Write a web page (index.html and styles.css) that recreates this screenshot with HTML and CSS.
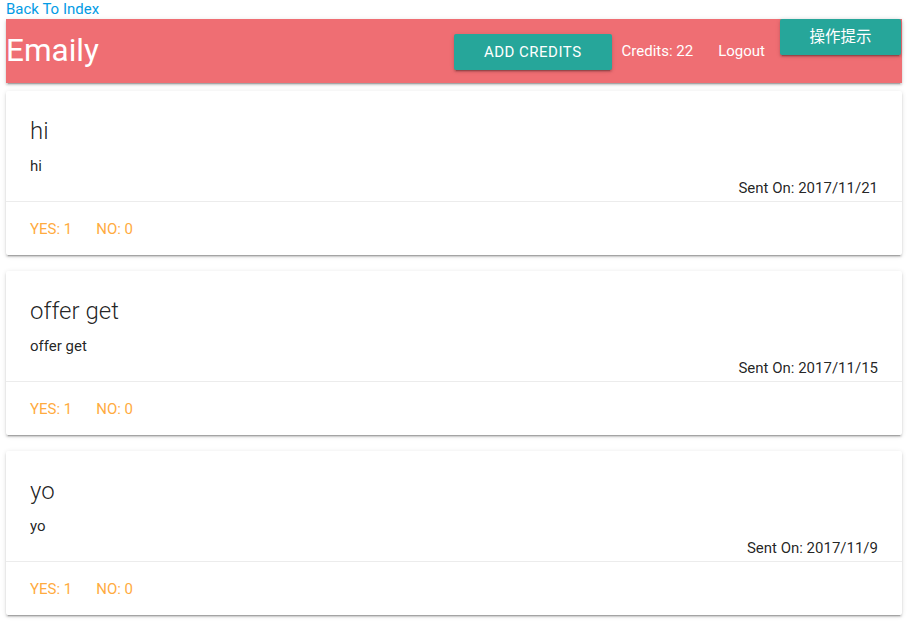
FILE: index.html
```html
<!DOCTYPE html>
<html>
<head>
<meta charset="utf-8">
<link rel="stylesheet" href="styles.css">
</head>
<body>
<div class="page">
  <div class="back"><a href="#">Back To Index</a></div>
  <nav class="nav">
    <a class="brand" href="#">Emaily</a>
    <ul class="menu">
      <li><button class="btn">Add Credits</button></li>
      <li class="credits">Credits: 22</li>
      <li><a class="navlink" href="#">Logout</a></li>
    </ul>
    <button class="btn tip">操作提示</button>
  </nav>

  <div class="card">
    <div class="card-content">
      <span class="card-title">hi</span>
      <p class="body">hi</p>
      <p class="date">Sent On: 2017/11/21</p>
    </div>
    <div class="card-action">
      <a href="#">Yes: 1</a>
      <a href="#">No: 0</a>
    </div>
  </div>

  <div class="card">
    <div class="card-content">
      <span class="card-title">offer get</span>
      <p class="body">offer get</p>
      <p class="date">Sent On: 2017/11/15</p>
    </div>
    <div class="card-action">
      <a href="#">Yes: 1</a>
      <a href="#">No: 0</a>
    </div>
  </div>

  <div class="card">
    <div class="card-content">
      <span class="card-title">yo</span>
      <p class="body">yo</p>
      <p class="date">Sent On: 2017/11/9</p>
    </div>
    <div class="card-action">
      <a href="#">Yes: 1</a>
      <a href="#">No: 0</a>
    </div>
  </div>
</div>
</body>
</html>
```

FILE: styles.css
```css
html, body {
  margin: 0;
  padding: 0;
  background: #fff;
  font-family: Roboto, "Noto Sans CJK SC", sans-serif;
  font-size: 15px;
  color: rgba(0, 0, 0, 0.87);
}

.page {
  margin: 0 11px 0 6px;
}

.back {
  line-height: 19px;
  height: 19px;
  font-size: 15px;
}

.back a {
  color: #039be5;
  text-decoration: none;
}

.nav {
  display: flex;
  height: 64px;
  background: #ef6e73;
  color: #fff;
  box-shadow: 0 2px 2px 0 rgba(0,0,0,0.14), 0 1px 5px 0 rgba(0,0,0,0.12), 0 3px 1px -2px rgba(0,0,0,0.2);
}

.brand {
  color: #fff;
  text-decoration: none;
  font-size: 31.5px;
  line-height: 64px;
  flex: 1;
}

.menu {
  list-style: none;
  margin: 0;
  padding: 0;
  display: flex;
  align-items: center;
  font-size: 15px;
}

.credits {
  margin: 0 10px;
}

.navlink {
  color: #fff;
  text-decoration: none;
  padding: 0 15px;
  line-height: 64px;
  display: block;
}

.btn {
  border: none;
  border-radius: 2px;
  background: #26a69a;
  color: #fff;
  height: 36px;
  line-height: 36px;
  padding: 0 30px;
  font-family: Roboto, "Noto Sans CJK SC", sans-serif;
  font-size: 15px;
  text-transform: uppercase;
  letter-spacing: 0.5px;
  box-shadow: 0 2px 2px 0 rgba(0,0,0,0.14), 0 1px 5px 0 rgba(0,0,0,0.12), 0 3px 1px -2px rgba(0,0,0,0.2);
  display: block;
  margin-top: 2px;
}

.tip {
  align-self: flex-start;
  width: 121px;
  padding: 0;
  margin: 0 1px 0 0;
  font-size: 15.5px;
  letter-spacing: 0;
}

.card {
  margin: 8px 0 16px 0;
  background: #fff;
  border-radius: 2px;
  box-shadow: 0 2px 2px 0 rgba(0,0,0,0.14), 0 1px 5px 0 rgba(0,0,0,0.12), 0 3px 1px -2px rgba(0,0,0,0.2);
}

.card-content {
  padding: 24px;
  height: 62px;
  position: relative;
}

.card-title {
  display: block;
  font-size: 24px;
  font-weight: 300;
  line-height: 32px;
  margin-bottom: 8px;
}

.body {
  margin: 0;
  line-height: 22px;
}

.date {
  margin: 1px 0 0 0;
  line-height: 21px;
  text-align: right;
}

.card-action {
  border-top: 1px solid rgba(160,160,160,0.2);
  padding: 17px 24px 15px;
  line-height: 21px;
  display: flex;
  gap: 24px;
}

.card-action a {
  color: #ffab40;
  text-decoration: none;
  text-transform: uppercase;
}
```
